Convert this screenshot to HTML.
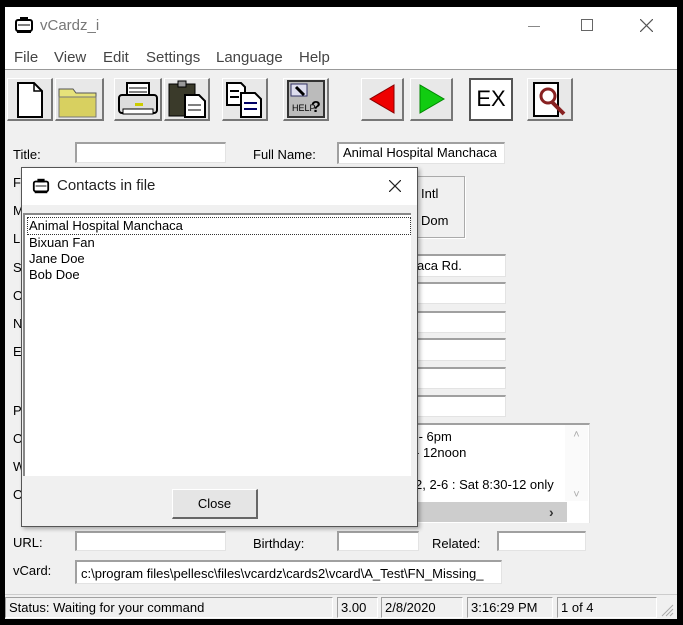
<!DOCTYPE html>
<html><head><meta charset="utf-8"><style>
*{box-sizing:border-box;margin:0;padding:0}
body{width:683px;height:625px;background:#000;position:relative;overflow:hidden;font-family:"Liberation Sans",sans-serif;font-size:13px;color:#000}
.a{position:absolute}
.win{left:5px;top:7px;width:672px;height:612px;background:#f0f0f0}
.inp{position:absolute;background:#fff;border-top:2px solid #a0a0a0;border-left:2px solid #a0a0a0;border-bottom:1px solid #e3e3e3;border-right:1px solid #e3e3e3;font-size:13px;padding:2px 4px;white-space:nowrap;overflow:hidden}
.lb{position:absolute;font-size:13px}
.btn{position:absolute;top:78px;height:43px;background:#e8e8e8;border-top:1px solid #fff;border-left:1px solid #fff;border-right:2px solid #777;border-bottom:2px solid #777}
.sb{position:absolute;top:597px;height:21px;border-top:1px solid #a0a0a0;border-left:1px solid #a0a0a0;border-right:1px solid #fff;border-bottom:1px solid #fff;padding:2px 3px;font-size:13px;white-space:nowrap}
</style></head><body>
<div class="a win"></div>
<!-- title bar -->
<div class="a" style="left:5px;top:7px;width:672px;height:36px;background:#fff"></div>
<svg class="a" style="left:14px;top:16px" width="20" height="18" viewBox="0 0 20 18"><rect x="2" y="4" width="16" height="11" rx="2" fill="#fff" stroke="#000" stroke-width="2"/><rect x="6" y="1" width="8" height="4" fill="#000"/><line x1="4" y1="9" x2="16" y2="9" stroke="#000"/><rect x="3" y="14" width="14" height="3" fill="#000"/></svg>
<div class="lb" style="left:40px;top:17px;font-size:15px;color:#777">vCardz_i</div>
<div class="a" style="left:528px;top:26px;width:12px;height:1px;background:#888"></div>
<div class="a" style="left:581px;top:19px;width:12px;height:12px;border:1px solid #666"></div>
<svg class="a" style="left:640px;top:19px" width="13" height="13"><path d="M0 0L13 13M13 0L0 13" stroke="#555" stroke-width="1.2"/></svg>
<!-- menu -->
<div class="a" style="left:5px;top:43px;width:672px;height:27px;background:#fff;border-bottom:1px solid #999"></div>
<div class="lb" style="left:14px;top:49px;font-size:15px;color:#444;word-spacing:0">File</div>
<div class="lb" style="left:54px;top:49px;font-size:15px;color:#444">View</div>
<div class="lb" style="left:103px;top:49px;font-size:15px;color:#444">Edit</div>
<div class="lb" style="left:146px;top:49px;font-size:15px;color:#444">Settings</div>
<div class="lb" style="left:216px;top:49px;font-size:15px;color:#444">Language</div>
<div class="lb" style="left:299px;top:49px;font-size:15px;color:#444">Help</div>
<!-- toolbar -->
<div class="btn" style="left:7px;width:46px"><svg width="44" height="40"><path d="M10 4h16l8 8v26H10z" fill="#fff" stroke="#000" stroke-width="2"/><path d="M26 4v8h8" fill="none" stroke="#000" stroke-width="1.5"/></svg></div>
<div class="btn" style="left:55px;width:49px"><svg width="46" height="40"><path d="M3 10h14l3 4h20v24H3z" fill="#e6e27a" stroke="#555"/><path d="M3 18h37v20H3z" fill="#d8d060" stroke="#777"/></svg></div>
<div class="btn" style="left:114px;width:48px"><svg width="46" height="40"><rect x="12" y="4" width="22" height="14" fill="#fff" stroke="#000" stroke-width="2"/><rect x="4" y="16" width="38" height="18" rx="3" fill="#ddd" stroke="#000" stroke-width="2"/><line x1="14" y1="9" x2="32" y2="9" stroke="#000"/><line x1="14" y1="13" x2="32" y2="13" stroke="#000"/><rect x="20" y="24" width="8" height="3" fill="#cc0"/><rect x="8" y="30" width="30" height="5" fill="#fff" stroke="#000"/></svg></div>
<div class="btn" style="left:164px;width:46px"><svg width="44" height="40"><rect x="4" y="5" width="26" height="32" fill="#3a3a2a" stroke="#000"/><rect x="13" y="2" width="8" height="6" fill="#999" stroke="#000"/><path d="M20 16h14l6 6v16H20z" fill="#fff" stroke="#000" stroke-width="2"/><line x1="23" y1="26" x2="36" y2="26" stroke="#000"/><line x1="23" y1="31" x2="36" y2="31" stroke="#000"/></svg></div>
<div class="btn" style="left:222px;width:46px"><svg width="44" height="40"><path d="M4 4h14l4 4v18H4z" fill="#fff" stroke="#000" stroke-width="2"/><path d="M18 14h14l6 6v18H18z" fill="#fff" stroke="#000" stroke-width="2"/><line x1="7" y1="12" x2="16" y2="12" stroke="#000" stroke-width="2"/><line x1="7" y1="18" x2="16" y2="18" stroke="#000" stroke-width="2"/><line x1="21" y1="24" x2="34" y2="24" stroke="#006" stroke-width="2"/><line x1="21" y1="30" x2="34" y2="30" stroke="#006" stroke-width="2"/></svg></div>
<div class="btn" style="left:283px;width:46px"><svg width="44" height="40"><rect x="4" y="2" width="36" height="36" fill="#bbb" stroke="#333" stroke-width="2"/><rect x="7" y="5" width="16" height="12" fill="#dde" stroke="#336"/><path d="M12 8l8 8" stroke="#000" stroke-width="3"/><text x="8" y="32" font-size="9" font-family="Liberation Sans">HELP</text><text x="27" y="33" font-size="16" font-weight="bold" font-family="Liberation Sans">?</text></svg></div>
<div class="btn" style="left:361px;width:43px"><svg width="41" height="40"><path d="M32 6v28L8 20z" fill="#e00" stroke="#800"/></svg></div>
<div class="btn" style="left:410px;width:43px"><svg width="41" height="40"><path d="M9 6v28l24-14z" fill="#1c1" stroke="#080"/></svg></div>
<div class="btn" style="left:469px;width:44px;background:#fff;border:2px solid #555"><div style="font-size:22px;text-align:center;line-height:38px">EX</div></div>
<div class="btn" style="left:527px;width:46px"><svg width="44" height="40"><rect x="6" y="4" width="24" height="33" fill="#fff" stroke="#000" stroke-width="2"/><circle cx="20" cy="17" r="7" fill="#fff" stroke="#822" stroke-width="3"/><path d="M24 23l12 12" stroke="#822" stroke-width="4"/></svg></div>
<!-- fields -->
<div class="lb" style="left:13px;top:147px">Title:</div>
<div class="inp" style="left:75px;top:142px;width:151px;height:21px"></div>
<div class="lb" style="left:253px;top:147px">Full Name:</div>
<div class="inp" style="left:337px;top:142px;width:168px;height:22px;padding-top:1px">Animal Hospital Manchaca</div>
<div class="lb" style="left:13px;top:175px">F</div>
<div class="lb" style="left:13px;top:203px">M</div>
<div class="lb" style="left:13px;top:231px">L</div>
<div class="lb" style="left:13px;top:260px">S</div>
<div class="lb" style="left:13px;top:288px">O</div>
<div class="lb" style="left:13px;top:316px">N</div>
<div class="lb" style="left:13px;top:344px">E</div>
<div class="lb" style="left:13px;top:403px">P</div>
<div class="lb" style="left:13px;top:431px">O</div>
<div class="lb" style="left:13px;top:459px">W</div>
<div class="lb" style="left:13px;top:487px">O</div>
<div class="a" style="left:400px;top:176px;width:65px;height:62px;border:1px solid #aaa;box-shadow:1px 1px 0 #fff"></div>
<div class="lb" style="left:421px;top:186px">Intl</div>
<div class="lb" style="left:421px;top:213px">Dom</div>
<div class="inp" style="left:395px;top:254px;width:111px;height:23px;padding-left:20px">aca Rd.</div>
<div class="inp" style="left:395px;top:282px;width:111px;height:22px"></div>
<div class="inp" style="left:395px;top:311px;width:111px;height:22px"></div>
<div class="inp" style="left:395px;top:338px;width:111px;height:23px"></div>
<div class="inp" style="left:395px;top:367px;width:111px;height:22px"></div>
<div class="inp" style="left:395px;top:395px;width:111px;height:22px"></div>
<div class="inp" style="left:395px;top:423px;width:195px;height:100px;padding:4px 0 0 18px;line-height:16px;border-bottom:none">&nbsp;- 6pm<br>- 12noon<br><br>2, 2-6 : Sat 8:30-12 only</div>
<div class="a" style="left:565px;top:425px;width:23px;height:76px;background:#fafafa;color:#aaa;font-size:11px;text-align:center;line-height:20px">˄<br><br><br>˅</div>
<div class="a" style="left:397px;top:502px;width:170px;height:20px;background:#cdcdcd"></div>
<div class="a" style="left:549px;top:502px;width:18px;height:20px;font-size:14px;line-height:20px;font-weight:bold;color:#333">›</div>
<div class="lb" style="left:13px;top:535px">URL:</div>
<div class="inp" style="left:75px;top:531px;width:151px;height:20px"></div>
<div class="lb" style="left:253px;top:536px">Birthday:</div>
<div class="inp" style="left:337px;top:531px;width:82px;height:20px"></div>
<div class="lb" style="left:432px;top:536px">Related:</div>
<div class="inp" style="left:497px;top:531px;width:89px;height:20px"></div>
<div class="lb" style="left:13px;top:563px">vCard:</div>
<div class="inp" style="left:75px;top:560px;width:427px;height:24px;padding-top:4px">c:\program files\pellesc\files\vcardz\cards2\vcard\A_Test\FN_Missing_</div>
<!-- status -->
<div class="a" style="left:5px;top:594px;width:672px;height:1px;background:#ccc"></div>
<div class="sb" style="left:5px;width:328px">Status: Waiting for your command</div>
<div class="sb" style="left:337px;width:41px">3.00</div>
<div class="sb" style="left:381px;width:82px">2/8/2020</div>
<div class="sb" style="left:467px;width:86px">3:16:29 PM</div>
<div class="sb" style="left:557px;width:100px">1 of 4</div>
<svg class="a" style="left:660px;top:603px" width="14" height="14"><path d="M13 2L2 13M13 6L6 13M13 10L10 13" stroke="#aaa"/></svg>
<!-- dialog -->
<div class="a" style="left:21px;top:167px;width:397px;height:360px;background:#f0f0f0;border:1px solid #555;box-shadow:2px 2px 4px rgba(0,0,0,.3)"></div>
<div class="a" style="left:22px;top:168px;width:395px;height:37px;background:#fff"></div>
<svg class="a" style="left:32px;top:177px" width="18" height="18" viewBox="0 0 20 18"><rect x="2" y="4" width="16" height="11" rx="2" fill="#fff" stroke="#000" stroke-width="2"/><rect x="6" y="1" width="8" height="4" fill="#000"/><line x1="4" y1="9" x2="16" y2="9" stroke="#000"/><rect x="3" y="14" width="14" height="3" fill="#000"/></svg>
<div class="lb" style="left:57px;top:177px;font-size:15px;color:#222">Contacts in file</div>
<svg class="a" style="left:389px;top:180px" width="12" height="12"><path d="M0 0L12 12M12 0L0 12" stroke="#222" stroke-width="1.2"/></svg>
<div class="a" style="left:23px;top:213px;width:388px;height:263px;background:#fff;border-top:2px solid #888;border-left:2px solid #888;line-height:16px;padding:2px 0 0 2px">
<div style="border:1px dotted #333;padding-left:1px">Animal Hospital Manchaca</div>
<div style="padding-left:2px">Bixuan Fan</div>
<div style="padding-left:2px">Jane Doe</div>
<div style="padding-left:2px">Bob Doe</div>
</div>
<div class="a" style="left:172px;top:489px;width:86px;height:30px;background:#e5e5e5;border-top:1px solid #fff;border-left:1px solid #fff;border-right:2px solid #666;border-bottom:2px solid #666;text-align:center;line-height:27px">Close</div>
</body></html>
